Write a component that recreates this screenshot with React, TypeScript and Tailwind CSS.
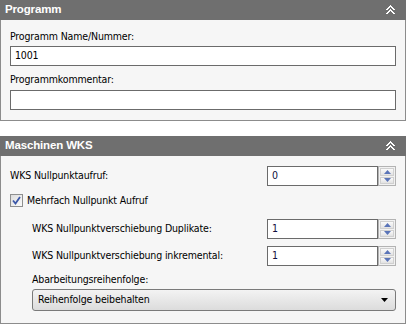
import React from 'react';

const font = { fontFamily: '"DejaVu Sans Condensed", "DejaVu Sans", sans-serif', fontStretch: 'condensed' as const };
const headFont = { fontFamily: '"Liberation Sans", Arial, sans-serif' };

const Collapse = () => (
    <svg width="9" height="10" viewBox="0 0 9 10" className="text-white" shapeRendering="crispEdges">
        <path d="M0.5 5 L4.5 1 L8.5 5" fill="none" stroke="currentColor" strokeWidth="1.6" />
        <path d="M0.5 9 L4.5 5 L8.5 9" fill="none" stroke="currentColor" strokeWidth="1.6" />
    </svg>
);

const PanelHeader = ({ title }: { title: string }) => (
    <div className="h-5 bg-[#6f6f6f] flex items-center justify-between pl-[5px] pr-[11px]" style={headFont}>
        <span className="text-white font-bold text-[11.5px]">{title}</span>
        <Collapse />
    </div>
);

const Spinner = ({ value }: { value: string }) => (
    <div className="flex h-5 w-[129px]">
        <div className="flex-1 border border-[#6b6b6b] bg-white flex items-center pl-[4px] text-[#101040]">
            {value}
        </div>
        <div className="w-[18px] border border-[#b3b3b3] bg-[#f2f2f2] flex flex-col p-[1px] gap-[1px]">
            <div className="flex-1 bg-gradient-to-b from-[#fafafa] to-[#e2e2e2] border border-[#d0d0d0] flex items-center justify-center">
                <svg width="7" height="4" viewBox="0 0 7 4"><path d="M3.5 0 L7 4 L0 4 Z" fill="#5a74b8" /></svg>
            </div>
            <div className="flex-1 bg-gradient-to-b from-[#fafafa] to-[#e2e2e2] border border-[#d0d0d0] flex items-center justify-center">
                <svg width="7" height="4" viewBox="0 0 7 4"><path d="M0 0 L7 0 L3.5 4 Z" fill="#5a74b8" /></svg>
            </div>
        </div>
    </div>
);

const App: React.FC = () => {
    return (
        <div className="w-[406px] h-[324px] bg-white text-black text-[10.5px] tracking-[-0.15px]" style={font}>
            {/* Programm */}
            <div>
                <PanelHeader title="Programm" />
                <div className="bg-[#f6f6f6] border-x border-b border-[#8c8c8c] h-[101px] px-[9px] pt-[9px]">
                    <div className="leading-[15px] mb-[2px]">Programm Name/Nummer:</div>
                    <div className="h-5 border border-[#6b6b6b] bg-white flex items-center pl-[4px]">1001</div>
                    <div className="leading-[15px] mt-[6px] mb-[3px]">Programmkommentar:</div>
                    <div className="h-5 border border-[#6b6b6b] bg-white" />
                </div>
            </div>

            <div className="h-[15px]" />

            {/* Maschinen WKS */}
            <div>
                <PanelHeader title="Maschinen WKS" />
                <div className="bg-[#f6f6f6] border-x border-b border-[#8c8c8c] h-[168px] px-[9px] pt-[10px]">
                    <div className="flex items-center justify-between">
                        <span>WKS Nullpunktaufruf:</span>
                        <Spinner value="0" />
                    </div>
                    <div className="flex items-center gap-[4px] mt-[8px] h-[13px]">
                        <div className="w-[13px] h-[13px] border border-[#8e8f8f] bg-gradient-to-br from-[#dcdcdc] to-[#fbfbfb] flex items-center justify-center">
                            <svg width="9" height="9" viewBox="0 0 9 9">
                                <path d="M1 4.5 L3.5 7.5 L8 1" fill="none" stroke="#3b57a8" strokeWidth="1.8" />
                            </svg>
                        </div>
                        <span>Mehrfach Nullpunkt Aufruf</span>
                    </div>
                    <div className="pl-[22px] mt-[12px] flex flex-col">
                        <div className="flex items-center justify-between">
                            <span>WKS Nullpunktverschiebung Duplikate:</span>
                            <Spinner value="1" />
                        </div>
                        <div className="flex items-center justify-between mt-[7px]">
                            <span>WKS Nullpunktverschiebung inkremental:</span>
                            <Spinner value="1" />
                        </div>
                        <div className="leading-[15px] mt-[6px] mb-[2px]">Abarbeitungsreihenfolge:</div>
                        <div className="h-[22px] rounded-[3px] border border-[#7a7a7a] bg-gradient-to-b from-[#f3f3f3] to-[#dcdcdc] flex items-center justify-between pl-[5px] pr-[7px]">
                            <span>Reihenfolge beibehalten</span>
                            <svg width="7" height="4" viewBox="0 0 7 4"><path d="M0 0 L7 0 L3.5 4 Z" fill="#000" /></svg>
                        </div>
                    </div>
                </div>
            </div>
        </div>
    );
};

export default App;
